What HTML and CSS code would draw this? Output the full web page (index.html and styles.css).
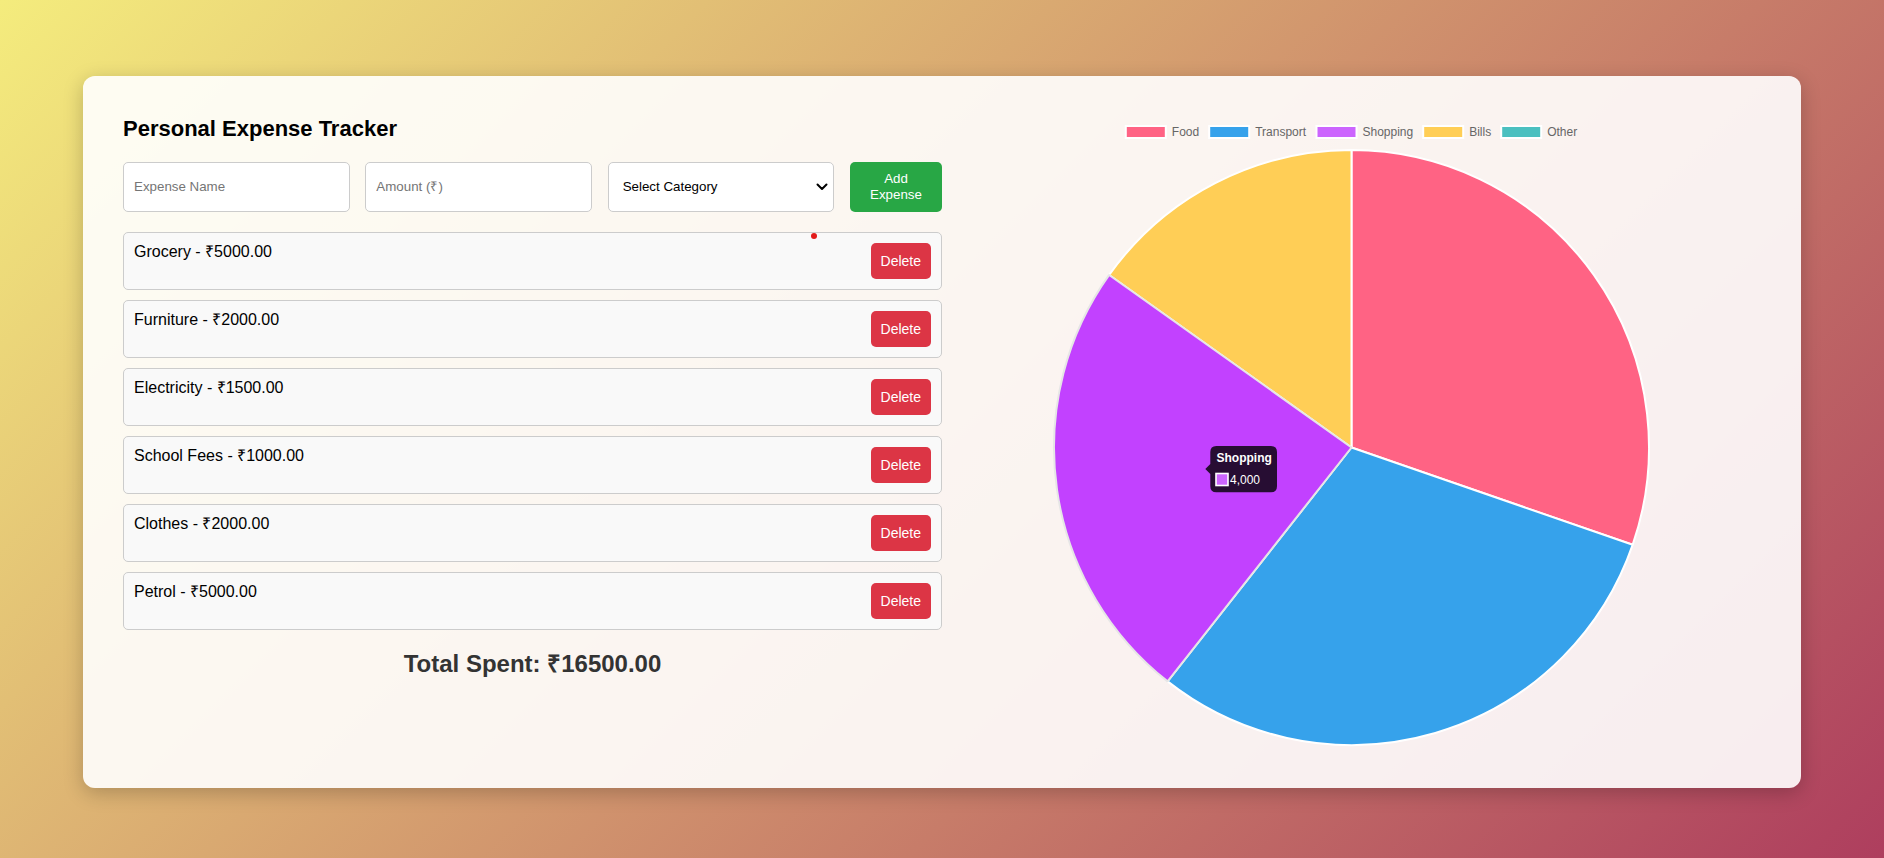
FILE: index.html
```html
<!DOCTYPE html>
<html lang="en">
<head>
<meta charset="UTF-8">
<title>Personal Expense Tracker</title>
<link rel="stylesheet" href="styles.css">
</head>
<body>
<div class="container">
  <span class="dot"></span>
  <div class="left">
    <h2 class="title">Personal Expense Tracker</h2>
    <div class="form">
      <input class="field" type="text" placeholder="Expense Name">
      <input class="field" type="text" placeholder="Amount (₹)">
      <div class="select-wrap">
        <select class="field select">
          <option>Select Category</option>
          <option>Food</option>
          <option>Transport</option>
          <option>Shopping</option>
          <option>Bills</option>
          <option>Other</option>
        </select>
        <svg class="chev" width="12" height="8" viewBox="0 0 12 8" xmlns="http://www.w3.org/2000/svg"><path d="M1.5,1.5 L6,6 L10.5,1.5" fill="none" stroke="#000" stroke-width="2" stroke-linecap="round" stroke-linejoin="round"/></svg>
      </div>
      <button class="add-btn">Add Expense</button>
    </div>
    <ul class="list">
      <li class="item"><span class="item-text">Grocery - ₹5000.00</span><button class="del-btn">Delete</button></li>
      <li class="item"><span class="item-text">Furniture - ₹2000.00</span><button class="del-btn">Delete</button></li>
      <li class="item"><span class="item-text">Electricity - ₹1500.00</span><button class="del-btn">Delete</button></li>
      <li class="item"><span class="item-text">School Fees - ₹1000.00</span><button class="del-btn">Delete</button></li>
      <li class="item"><span class="item-text">Clothes - ₹2000.00</span><button class="del-btn">Delete</button></li>
      <li class="item"><span class="item-text">Petrol - ₹5000.00</span><button class="del-btn">Delete</button></li>
    </ul>
    <h3 class="total">Total Spent: ₹16500.00</h3>
  </div>
  <div class="right">
    <svg class="chart" width="819" height="632" viewBox="0 0 819 632" xmlns="http://www.w3.org/2000/svg">
      <g class="legend">
        <rect x="183.8" y="10" width="40" height="12" fill="#ff6384" stroke="#fff" stroke-width="2"/>
        <text x="229.8" y="20.3">Food</text>
        <rect x="267.2" y="10" width="40" height="12" fill="#36a2eb" stroke="#fff" stroke-width="2"/>
        <text x="313.2" y="20.3">Transport</text>
        <rect x="374.5" y="10" width="40" height="12" fill="#cc65fe" stroke="#fff" stroke-width="2"/>
        <text x="420.5" y="20.3">Shopping</text>
        <rect x="481.2" y="10" width="40" height="12" fill="#ffce56" stroke="#fff" stroke-width="2"/>
        <text x="527.2" y="20.3">Bills</text>
        <rect x="559.2" y="10" width="40" height="12" fill="#4bc0c0" stroke="#fff" stroke-width="2"/>
        <text x="605.2" y="20.3">Other</text>
      </g>
      <g stroke-width="2" stroke-linejoin="bevel">
        <path d="M409.5,331.5 L409.5,34 A297.5,297.5 0 0 1 690.64,428.8 Z" fill="#ff6384" stroke="#fff"/>
        <path d="M409.5,331.5 L690.64,428.8 A297.5,297.5 0 0 1 225.59,565.36 Z" fill="#36a2eb" stroke="#fff"/>
        <path d="M409.5,331.5 L167.16,158.95 A297.5,297.5 0 0 1 409.5,34 Z" fill="#ffce56" stroke="#fff"/>
        <path d="M409.5,331.5 L225.59,565.36 A297.5,297.5 0 0 1 167.16,158.95 Z" fill="#c241ff" stroke="#e6e6e6"/>
      </g>
      <g class="tooltip">
        <path d="M274.3,330 H329 Q335,330 335,336 V370.3 Q335,376.3 329,376.3 H274.3 Q268.3,376.3 268.3,370.3 V358 L263.3,353 L268.3,348 V336 Q268.3,330 274.3,330 Z" fill="rgba(0,0,0,0.8)"/>
        <text class="tt-title" x="274.5" y="346.2">Shopping</text>
        <rect x="274" y="357.5" width="12" height="12" fill="#cc65fe" stroke="#fff" stroke-width="1.6"/>
        <text class="tt-body" x="288" y="367.5">4,000</text>
      </g>
    </svg>
  </div>
</div>
</body>
</html>
```
FILE: styles.css
```css
html, body {
  margin: 0;
  padding: 0;
}

body {
  min-height: 100vh;
  background: linear-gradient(135deg, #f4ec7d 0%, #ae3e5e 100%);
  font-family: "Liberation Sans", Arial, Helvetica, sans-serif;
  color: #000;
  overflow: hidden;
}

.container {
  position: relative;
  box-sizing: border-box;
  width: 1718px;
  margin: 76px auto 0;
  padding: 40px;
  display: flex;
  background: rgba(255, 255, 255, 0.9);
  border-radius: 12px;
  box-shadow: 0 5px 20px rgba(0, 0, 0, 0.22);
}

.dot {
  position: absolute;
  left: 728px;
  top: 157px;
  width: 6px;
  height: 6px;
  border-radius: 50%;
  background: #e21b1b;
}

.left,
.right {
  flex: 1 1 0;
  min-width: 0;
}

.right {
  display: flex;
  justify-content: center;
}

.title {
  margin: 0 0 21px;
  font-size: 22px;
  font-weight: bold;
  line-height: 25px;
}

.form {
  display: grid;
  grid-template-columns: 1fr 1fr 1fr 92px;
  gap: 15.5px;
  height: 49.5px;
}

.field {
  box-sizing: border-box;
  width: 100%;
  height: 49.5px;
  padding: 10px;
  border: 1px solid #ccc;
  border-radius: 5px;
  background: #fff;
  font-family: "Liberation Sans", Arial, sans-serif;
  font-size: 13.333px;
  color: #000;
  min-width: 0;
}

.field::placeholder {
  color: #757575;
}

.select-wrap {
  position: relative;
  min-width: 0;
}

.select {
  appearance: none;
  -webkit-appearance: none;
  padding-left: 14px;
  padding-right: 30px;
}

.chev {
  position: absolute;
  right: 6px;
  top: 21px;
  pointer-events: none;
}

.add-btn {
  box-sizing: border-box;
  height: 49.5px;
  padding: 0 10px;
  border: none;
  border-radius: 5px;
  background: #28a745;
  color: #fff;
  font-family: "Liberation Sans", Arial, sans-serif;
  font-size: 13.333px;
  line-height: 15.3px;
}

.list {
  list-style: none;
  margin: 20.5px 0 0;
  padding: 0;
}

.item {
  box-sizing: border-box;
  height: 57.5px;
  display: flex;
  justify-content: space-between;
  align-items: center;
  padding: 10px;
  margin-bottom: 10.5px;
  border: 1px solid #ccc;
  border-radius: 5px;
  background: #f9f9f9;
}

.item-text {
  align-self: flex-start;
  font-size: 16px;
  line-height: 18px;
}

.del-btn {
  box-sizing: border-box;
  height: 36px;
  padding: 0 10px;
  border: none;
  border-radius: 5px;
  background: #dc3545;
  color: #fff;
  font-family: "Liberation Sans", Arial, sans-serif;
  font-size: 14px;
  line-height: 16px;
}

.total {
  margin: 20px 0 0;
  text-align: center;
  font-size: 24px;
  line-height: 28px;
  font-weight: bold;
  color: #333;
}

.chart {
  display: block;
  flex: none;
}

.legend text {
  font-family: "Liberation Sans", Arial, sans-serif;
  font-size: 12px;
  fill: #666;
}

.tt-title {
  font-family: "Liberation Sans", Arial, sans-serif;
  font-size: 12px;
  font-weight: bold;
  fill: #fff;
}

.tt-body {
  font-family: "Liberation Sans", Arial, sans-serif;
  font-size: 12px;
  fill: #fff;
}
```
